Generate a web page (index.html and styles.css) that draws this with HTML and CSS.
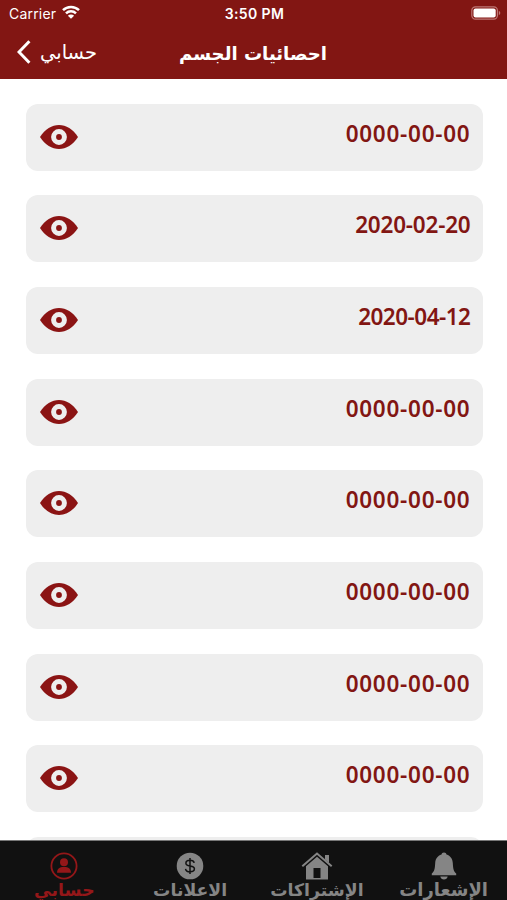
FILE: index.html
```html
<!DOCTYPE html>
<html lang="ar">
<head>
	<meta charset="UTF-8">
	<title>احصائيات الجسم</title>
	<link rel="stylesheet" href="styles.css">
</head>
<body>
	<svg class="defs" width="0" height="0">
		<symbol id="eye" viewBox="0 0 38 24">
			<path fill="#8b1414" d="M0 12C5 4 12 0 19 0s14 4 19 12c-5 8-12 12-19 12S5 20 0 12z"/>
			<circle cx="19" cy="12" r="5.4" fill="none" stroke="#eee" stroke-width="5"/>
		</symbol>
	</svg>
	<div id="container">
		<header>
			<div class="status">
				<div class="carrier">
					<span>Carrier</span>
					<svg width="18" height="14" viewBox="0 0 18 14">
						<g fill="none" stroke="#fff" stroke-width="2.5">
							<path d="M1 5.2a11.3 11.3 0 0 1 16 0"/>
							<path d="M4 8.4a7.1 7.1 0 0 1 10 0"/>
						</g>
						<path fill="#fff" d="M9 13.8L5.9 10.7a4.4 4.4 0 0 1 6.2 0z"/>
					</svg>
				</div>
				<b class="time">3:50 PM</b>
				<svg class="battery" width="30" height="14" viewBox="0 0 30 14">
					<rect x=".8" y=".8" width="25.6" height="12.4" rx="3.6" fill="none" stroke="#bd7775" stroke-width="1.2"/>
					<rect x="2.5" y="2.5" width="22.2" height="9" rx="2" fill="#fff"/>
					<path fill="#bd7775" d="M27.8 4.8c2 .8 2 3.6 0 4.4z"/>
				</svg>
			</div>
			<div class="navbar">
				<a class="back">
					<svg width="14" height="24" viewBox="0 0 14 24"><path fill="none" stroke="#fff" stroke-width="3" d="M12.4 1.2L2 12l10.4 10.8"/></svg>
					<span dir="rtl">حسابي</span>
				</a>
				<h1 dir="rtl">احصائيات الجسم</h1>
			</div>
		</header>
		<main>
			<div class="card"><svg class="eye"><use href="#eye"/></svg><b>0000-00-00</b></div>
			<div class="card"><svg class="eye"><use href="#eye"/></svg><b class="feb">2020-02-20</b></div>
			<div class="card"><svg class="eye"><use href="#eye"/></svg><b class="apr">2020-04-12</b></div>
			<div class="card"><svg class="eye"><use href="#eye"/></svg><b>0000-00-00</b></div>
			<div class="card"><svg class="eye"><use href="#eye"/></svg><b>0000-00-00</b></div>
			<div class="card"><svg class="eye"><use href="#eye"/></svg><b>0000-00-00</b></div>
			<div class="card"><svg class="eye"><use href="#eye"/></svg><b>0000-00-00</b></div>
			<div class="card"><svg class="eye"><use href="#eye"/></svg><b>0000-00-00</b></div>
			<div class="card"></div>
		</main>
		<nav>
			<a class="tab active">
				<svg width="28" height="28" viewBox="0 0 28 28">
					<circle cx="14" cy="14" r="12.6" fill="none" stroke="currentColor" stroke-width="1.8"/>
					<circle cx="14" cy="10.3" r="4" fill="currentColor"/>
					<path fill="currentColor" d="M7 20.8c0-3.8 2.6-5.5 5-5.8h4c2.4.3 5 2 5 5.8z"/>
				</svg>
				<span dir="rtl">حسابي</span>
			</a>
			<a class="tab ads">
				<svg width="28" height="28" viewBox="0 0 28 28">
					<circle cx="14" cy="14" r="13.3" fill="currentColor"/>
					<path fill="none" stroke="#111" stroke-width="1.5" d="M18.2 10.8c-.4-1.7-2-2.5-4.2-2.5-2.4 0-4.1 1.1-4.1 2.9 0 4 8.5 1.7 8.5 5.6 0 1.9-1.8 3-4.3 3-2.6 0-4.3-1.1-4.6-3M14 6v16"/>
				</svg>
				<span dir="rtl">الاعلانات</span>
			</a>
			<a class="tab subs">
				<svg width="32" height="28" viewBox="0 0 32 28">
					<path fill="none" stroke="currentColor" stroke-width="2" d="M1.3 14.3L16 1.6l14.7 12.7"/>
					<path fill="currentColor" d="M24 3h4v8l-4-3.5zM16 4.7l11 9.5v13.3H5V14.2zM12.500 16v10h7V16z" fill-rule="evenodd"/>
				</svg>
				<span dir="rtl">الإشتراكات</span>
			</a>
			<a class="tab alerts">
				<svg width="26" height="28" viewBox="0 0 26 28">
					<path fill="currentColor" d="M13 .4c1.5 0 2.3.9 2.5 2.2 4 1.2 6 4.4 6.3 8.4.3 6 .9 8.5 3.4 10.5v1.7H.8v-1.7c2.5-2 3.1-4.5 3.4-10.5.3-4 2.3-7.2 6.3-8.4C10.7 1.3 11.5.4 13 .4zM9.3 24.5h7.4c-.4 1.9-1.8 3-3.7 3s-3.3-1.1-3.7-3z"/>
				</svg>
				<span dir="rtl">الإشعارات</span>
			</a>
		</nav>
	</div>
</body>
</html>
```
FILE: styles.css
```css
html, body {
	height: 100%;
	margin: 0;
	padding: 0;
	background: #fff;
	overflow: hidden;
}
body {
	font-family: Inter, "DejaVu Sans", sans-serif;
}
.defs {
	display: none;
}
svg {
	display: block;
	flex: none;
}
#container {
	display: flex;
	flex-direction: column;
	height: 900px;
	width: 507px;
	overflow: hidden;
}
header {
	box-sizing: border-box;
	flex: none;
	height: 79px;
	background: #821613;
	color: #fff;
}
.status {
	display: grid;
	grid-template-columns: 1fr auto 1fr;
	align-items: center;
	height: 27px;
	padding: 0 7px 0 9px;
	font-size: 14px;
}
.carrier {
	display: flex;
	gap: 6px;
	letter-spacing: .2px;
}
.carrier span {
	line-height: 17px;
}
.time {
	font-weight: 600;
	letter-spacing: .4px;
}
.battery {
	justify-self: end;
	margin: 0 -1px 1px 0;
}
.navbar {
	display: grid;
	grid-template-columns: 179px auto 1fr;
	height: 52px;
}
.back {
	display: flex;
	align-items: center;
	gap: 9px;
	height: 50px;
	padding-left: 17px;
	font-size: 19.5px;
}
h1 {
	margin: 0;
	font-family: "DejaVu Sans", sans-serif;
	font-size: 18.1px;
	line-height: 53px;
	font-weight: bold;
	white-space: nowrap;
}
main {
	box-sizing: border-box;
	flex: 1;
	display: flex;
	flex-direction: column;
	gap: 24.7px;
	min-height: 0;
	overflow: hidden;
	padding: 24.5px 24.5px 0 25.5px;
}
.card {
	box-sizing: border-box;
	flex: none;
	display: flex;
	justify-content: space-between;
	height: 67px;
	padding: 0 12px 0 14.5px;
	border-radius: 12px;
	background: #eee;
}
.eye {
	width: 38px;
	height: 24px;
	margin-top: 21px;
}
.card b {
	font-family: "Noto Sans", sans-serif;
	font-size: 22.5px;
	font-weight: 600;
	line-height: 60px;
	letter-spacing: .75px;
	color: #821613;
}
.card .feb {
	letter-spacing: -.2px;
}
.card .apr {
	letter-spacing: -.5px;
}
nav {
	box-sizing: border-box;
	flex: none;
	display: grid;
	grid-template-columns: repeat(4, 1fr);
	height: 60px;
	border-top: 1px solid #777;
	background: #111;
}
.tab {
	display: flex;
	flex-direction: column;
	align-items: center;
	padding-top: 11px;
	color: #858585;
	font-family: "DejaVu Sans", sans-serif;
	font-size: 17.3px;
	font-weight: bold;
	white-space: nowrap;
}
.tab span {
	line-height: 20px;
}
.alerts {
	font-size: 18px;
}
.active {
	padding-left: 2px;
	color: #941719;
}
```
